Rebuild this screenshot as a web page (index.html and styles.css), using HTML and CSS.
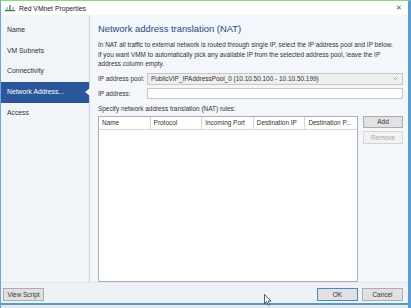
FILE: index.html
```html
<!DOCTYPE html>
<html lang="en">

<head>
    <meta charset="utf-8">
    <meta name="viewport" content="width=device-width, initial-scale=1.0">
    <title>Red VMnet Properties</title>
    <link rel="stylesheet" href="styles.css">
</head>

<body>

    <div class="window">
        <div class="titlebar">
            <svg class="appicon" width="10" height="8" viewBox="0 0 10 8">
                <rect x="0" y="6" width="10" height="1.2" fill="#3a7a3a"/>
                <rect x="4.4" y="1" width="1.2" height="5.5" fill="#3a7a3a"/>
                <rect x="1.5" y="3" width="1" height="3.5" fill="#5a8fc0"/>
                <rect x="7.5" y="3" width="1" height="3.5" fill="#5a8fc0"/>
            </svg>
            <span class="wintitle">Red VMnet Properties</span>
            <span class="close">&#x2715;</span>
        </div>

        <div class="main">
            <nav class="sidebar">
                <div class="navitem">Name</div>
                <div class="navitem">VM Subnets</div>
                <div class="navitem">Connectivity</div>
                <div class="navitem valgt">Network Address...</div>
                <div class="navitem">Access</div>
            </nav>

            <section class="content">
                <h2 class="heading">Network address translation (NAT)</h2>
                <p class="intro">In NAT all traffic to external network is routed through single IP, select the IP address pool and IP below.<br>If you want VMM to automatically pick any available IP from the selected address pool, leave the IP<br>address column empty.</p>

                <div class="formrow">
                    <span class="label">IP address pool:</span>
                    <div class="select">
                        <span>PublicVIP_IPAddressPool_0 (10.10.50.100 - 10.10.50.199)</span>
                        <svg width="5" height="3" viewBox="0 0 5 3"><path d="M0.5 0.5 L2.5 2.5 L4.5 0.5" stroke="#888" stroke-width="0.8" fill="none"/></svg>
                    </div>
                </div>
                <div class="formrow second">
                    <span class="label">IP address:</span>
                    <div class="input"></div>
                </div>

                <p class="specify">Specify network address translation (NAT) rules:</p>

                <div class="rules">
                    <div class="grid">
                        <div class="gridhead">
                            <div class="col">Name</div>
                            <div class="col">Protocol</div>
                            <div class="col">Incoming Port</div>
                            <div class="col">Destination IP</div>
                            <div class="col">Destination P...</div>
                        </div>
                    </div>
                    <div class="sidebuttons">
                        <button class="btn">Add</button>
                        <button class="btn disabled">Remove</button>
                    </div>
                </div>
            </section>
        </div>

        <footer>
            <button class="btn">View Script</button>
            <div class="okcancel">
                <button class="btn default">OK</button>
                <button class="btn">Cancel</button>
            </div>
        </footer>
        <div class="bottomstrip"></div>

        <svg class="cursor" width="8" height="12" viewBox="0 0 8 12">
            <path d="M0.5 0.5 L0.5 9.5 L2.6 7.6 L4.2 11.2 L5.6 10.6 L4.1 7.1 L7 7.1 Z" fill="#fff" stroke="#222" stroke-width="0.7"/>
        </svg>
    </div>

</body></html>
```

FILE: styles.css
```css
body {
    margin: 0;
    padding: 0;
    font-family: "Liberation Sans", Arial, sans-serif;
    color: #333;
    background: #fff;
}

.window {
    position: relative;
    width: 411px;
    height: 308px;
    display: flex;
    flex-direction: column;
    box-sizing: border-box;
    border-top: 1px solid #7ee07e;
    border-left: 1px solid #6aa6d8;
    border-right: 3px solid #5b9bd5;
    background: #f3f6fa;
    overflow: hidden;
}

.titlebar {
    height: 15px;
    background: #fff;
    display: flex;
    align-items: center;
    padding-left: 4px;
    padding-right: 6px;
    font-size: 6.8px;
    color: #222;
}

.appicon {
    margin-right: 4px;
}

.wintitle {
    flex: 1;
}

.close {
    font-size: 7px;
    color: #555;
}

.main {
    flex: 1;
    display: flex;
}

.sidebar {
    width: 88px;
    background: #f1f4f8;
    border-right: 1px solid #c9d1dc;
    padding-top: 4.5px;
    box-sizing: content-box;
}

.navitem {
    position: relative;
    height: 20.8px;
    line-height: 20.8px;
    padding-left: 6px;
    font-size: 6.8px;
    color: #333;
}

.valgt {
    background: #2b579a;
    color: #fff;
}

.valgt::after {
    content: "";
    position: absolute;
    right: -1px;
    top: 6px;
    border-top: 4.5px solid transparent;
    border-bottom: 4.5px solid transparent;
    border-right: 5px solid #f3f6fa;
}

.content {
    flex: 1;
    padding: 0 5px 0 8px;
    display: flex;
    flex-direction: column;
}

.heading {
    margin: 8px 0 0 0;
    font-size: 9.4px;
    line-height: 12px;
    font-weight: normal;
    color: #1f4a7c;
}

.intro {
    margin: 5px 0 0 0;
    font-size: 6.45px;
    line-height: 9.5px;
    white-space: nowrap;
}

.formrow {
    display: flex;
    align-items: center;
    margin-top: 4px;
    font-size: 6.45px;
}

.formrow.second {
    margin-top: 3px;
}

.label {
    width: 49px;
}

.select {
    flex: 1;
    height: 12px;
    box-sizing: border-box;
    border: 1px solid #c7c7c7;
    background: #efefef;
    display: flex;
    align-items: center;
    justify-content: space-between;
    padding: 0 4px 0 3px;
}

.input {
    flex: 1;
    height: 11px;
    box-sizing: border-box;
    border: 1px solid #c7c7c7;
    background: #fff;
}

.specify {
    margin: 5px 0 0 0;
    font-size: 6.45px;
    line-height: 9px;
}

.rules {
    display: flex;
    margin-top: 3px;
    height: 166px;
    gap: 5px;
}

.grid {
    flex: 1;
    border: 1px solid #a9b0b8;
    background: #fff;
}

.gridhead {
    display: grid;
    grid-template-columns: repeat(5, 1fr);
    height: 12px;
    border-bottom: 1px solid #d5d5d5;
}

.col {
    font-size: 6.45px;
    line-height: 12px;
    padding-left: 3px;
    border-right: 1px solid #d5d5d5;
    white-space: nowrap;
    overflow: hidden;
}

.col:last-child {
    border-right: 0;
}

.sidebuttons {
    width: 40px;
    display: flex;
    flex-direction: column;
    gap: 3px;
}

.btn {
    font-family: "Liberation Sans", Arial, sans-serif;
    font-size: 6.45px;
    color: #333;
    height: 12px;
    padding: 0;
    background: #e1e1e1;
    border: 1px solid #adadad;
    border-radius: 0;
}

.btn.disabled {
    color: #a8a8a8;
    background: #f2f2f2;
    border-color: #d5d5d5;
    height: 13px;
}

footer {
    height: 19px;
    display: flex;
    align-items: center;
    justify-content: space-between;
    padding: 2px 5px 0 2px;
    border-top: 1px solid #e2e6ec;
    background: #eef1f5;
}

footer .btn {
    width: 41px;
    height: 13px;
}

.okcancel {
    display: flex;
    gap: 4px;
}

.btn.default {
    border-color: #4a8ac6;
}

.bottomstrip {
    height: 3px;
    border-top: 2px solid #4f9fc9;
    background: #e6e9ec;
}

.cursor {
    position: absolute;
    left: 263px;
    top: 293px;
}
```
